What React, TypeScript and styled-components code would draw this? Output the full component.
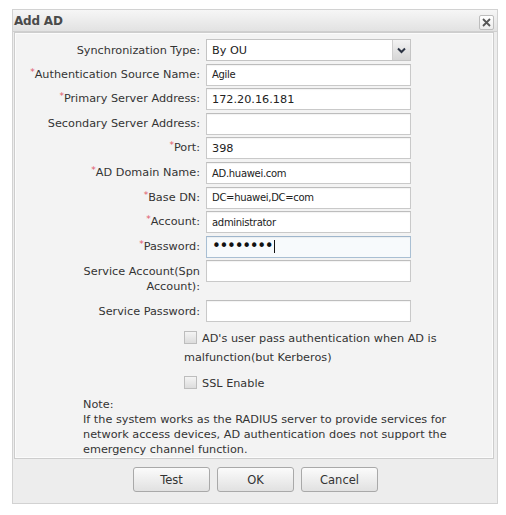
import React from "react";
import styled, { createGlobalStyle } from "styled-components";

const Global = createGlobalStyle`
  html, body { margin: 0; padding: 0; background: #ffffff; }
  body { font-family: "DejaVu Sans", "Liberation Sans", sans-serif; font-size: 11.25px; color: #333; }
  * { box-sizing: border-box; }
`;

const Dialog = styled.div`
  margin: 9px 0 0 12px;
  width: 486px;
  height: 495px;
  border: 1px solid #d2d2d2;
  background: #ededed;
  display: flex;
  flex-direction: column;
`;

const TitleBar = styled.div`
  height: 22px;
  flex: none;
  display: flex;
  align-items: center;
  justify-content: space-between;
  padding: 0 1px 0 1px;
  background: linear-gradient(#f6f6f6, #e2e2e2);
  border-bottom: 1px solid #cfcfcf;
`;

const Title = styled.span`
  font-family: "DejaVu Sans", sans-serif;
  font-weight: bold;
  font-size: 12px;
  color: #4a4a4a;
  letter-spacing: -0.2px;
`;

const CloseButton = styled.div`
  width: 15px;
  height: 15px;
  margin: 3px 2px 0 0;
  border: 1px solid #bdbdbd;
  border-radius: 2px;
  background: linear-gradient(#ffffff, #ececec);
  display: flex;
  align-items: center;
  justify-content: center;
`;

const Panel = styled.div`
  margin: 0 3px 0 1px;
  height: 427px;
  flex: none;
  background: #f3f3f3;
  border: 1px solid #cdcdcd;
  box-shadow: inset 0 0 0 1px #fbfbfb;
  padding: 6px 0 0 0;
  display: flex;
  flex-direction: column;
`;

const Form = styled.div`
  display: grid;
  grid-template-columns: 185px 205px;
  column-gap: 6px;
  row-gap: 2.62px;
  align-items: start;
`;

const Label = styled.div<{ $multi?: boolean }>`
  display: flex;
  flex-direction: column;
  align-items: flex-end;
  justify-content: ${(p) => (p.$multi ? "flex-start" : "center")};
  height: ${(p) => (p.$multi ? "37px" : "22px")};
  padding-top: ${(p) => (p.$multi ? "4px" : "0")};
  text-align: right;
  color: #333;
  line-height: 15px;
  white-space: nowrap;
`;

const LabelText = styled.span``;

const Star = styled.span`
  color: #e05a6a;
  font-size: 9px;
  position: relative;
  top: -3px;
`;

const Field = styled.div<{ $focus?: boolean; $compact?: boolean }>`
  height: 22px;
  border: 1px solid ${(p) => (p.$focus ? "#a9bfd3" : "#c9c9c9")};
  border-top-color: ${(p) => (p.$focus ? "#9fb6cc" : "#bdbdbd")};
  background: ${(p) => (p.$focus ? "#f7fafc" : "#ffffff")};
  box-shadow: inset 0 1px 1px rgba(0, 0, 0, 0.05);
  display: flex;
  align-items: center;
  padding-left: 5px;
  color: #222;
  font-size: ${(p) => (p.$compact ? "10px" : "11.25px")};
  letter-spacing: ${(p) => (p.$compact ? "-0.3px" : "0")};
  white-space: nowrap;
  overflow: hidden;
`;

const SelectBox = styled.div`
  height: 22px;
  border: 1px solid #c4c4c4;
  background: #ffffff;
  display: flex;
  align-items: stretch;
  color: #222;
`;

const SelectValue = styled.div`
  flex: 1;
  display: flex;
  align-items: center;
  padding-left: 5px;
`;

const SelectArrow = styled.div`
  width: 18px;
  border-left: 1px solid #cfcfcf;
  background: linear-gradient(#f3f3f3, #d6d6d6);
  display: flex;
  align-items: center;
  justify-content: center;
`;

const Dots = styled.span`
  font-size: 15px;
  line-height: 15px;
  letter-spacing: -1.3px;
  color: #111;
`;

const Caret = styled.span`
  display: inline-block;
  width: 1px;
  height: 13px;
  background: #111;
  margin-left: 2px;
`;

const CheckArea = styled.div`
  margin: 7px 0 0 169px;
  width: 280px;
  display: flex;
  flex-direction: column;
  gap: 7px;
`;

const CheckLine = styled.div`
  line-height: 19px;
  color: #333;
`;

const Box = styled.span`
  display: inline-block;
  width: 13px;
  height: 13px;
  border: 1px solid #bdbdbd;
  background: linear-gradient(#f4f4f4, #dcdcdc);
  vertical-align: -2px;
  margin-right: 5px;
`;

const Note = styled.div`
  margin: 4px 0 0 68px;
  line-height: 15px;
  color: #333;
`;

const ButtonBar = styled.div`
  flex: 1;
  display: flex;
  justify-content: center;
  align-items: flex-start;
  padding-top: 8px;
  gap: 7px;
  padding-left: 1px;
`;

const Button = styled.div`
  width: 77px;
  height: 25px;
  border: 1px solid #a9a9a9;
  border-radius: 3px;
  background: linear-gradient(#fbfbfb, #e1e1e1);
  display: flex;
  align-items: center;
  justify-content: center;
  color: #333;
  font-size: 11.5px;
`;

type Row = {
  label: string;
  required?: boolean;
  value?: string;
  compact?: boolean;
};

const rows: Row[] = [
  { label: "Authentication Source Name:", required: true, value: "Agile", compact: true },
  { label: "Primary Server Address:", required: true, value: "172.20.16.181" },
  { label: "Secondary Server Address:", value: "" },
  { label: "Port:", required: true, value: "398" },
  { label: "AD Domain Name:", required: true, value: "AD.huawei.com", compact: true },
  { label: "Base DN:", required: true, value: "DC=huawei,DC=com", compact: true },
  { label: "Account:", required: true, value: "administrator", compact: true },
];

export default function App() {
  return (
    <>
      <Global />
      <Dialog>
        <TitleBar>
          <Title>Add AD</Title>
          <CloseButton>
            <svg width="9" height="9" viewBox="0 0 9 9">
              <path d="M1 1 L8 8 M8 1 L1 8" stroke="#555" strokeWidth="1.8" />
            </svg>
          </CloseButton>
        </TitleBar>
        <Panel>
          <Form>
            <Label>
              <LabelText>Synchronization Type:</LabelText>
            </Label>
            <SelectBox>
              <SelectValue>By OU</SelectValue>
              <SelectArrow>
                <svg width="9" height="7" viewBox="0 0 9 7">
                  <path d="M1 1.5 L4.5 5 L8 1.5" stroke="#2c3444" strokeWidth="2" fill="none" />
                </svg>
              </SelectArrow>
            </SelectBox>
            {rows.map((r, i) => (
              <React.Fragment key={i}>
                <Label>
                  <LabelText>
                    {r.required && <Star>*</Star>}
                    {r.label}
                  </LabelText>
                </Label>
                <Field $compact={r.compact}>{r.value}</Field>
              </React.Fragment>
            ))}
            <Label>
              <LabelText>
                <Star>*</Star>Password:
              </LabelText>
            </Label>
            <Field $focus>
              <Dots>••••••••</Dots>
              <Caret />
            </Field>
            <Label $multi>
              <LabelText>Service Account(Spn</LabelText>
              <LabelText>Account):</LabelText>
            </Label>
            <Field />
            <Label>
              <LabelText>Service Password:</LabelText>
            </Label>
            <Field />
          </Form>
          <CheckArea>
            <CheckLine>
              <Box />
              AD's user pass authentication when AD is
              <br />
              malfunction(but Kerberos)
            </CheckLine>
            <CheckLine>
              <Box />
              SSL Enable
            </CheckLine>
          </CheckArea>
          <Note>
            Note:
            <br />
            If the system works as the RADIUS server to provide services for
            <br />
            network access devices, AD authentication does not support the
            <br />
            emergency channel function.
          </Note>
        </Panel>
        <ButtonBar>
          <Button>Test</Button>
          <Button>OK</Button>
          <Button>Cancel</Button>
        </ButtonBar>
      </Dialog>
    </>
  );
}
